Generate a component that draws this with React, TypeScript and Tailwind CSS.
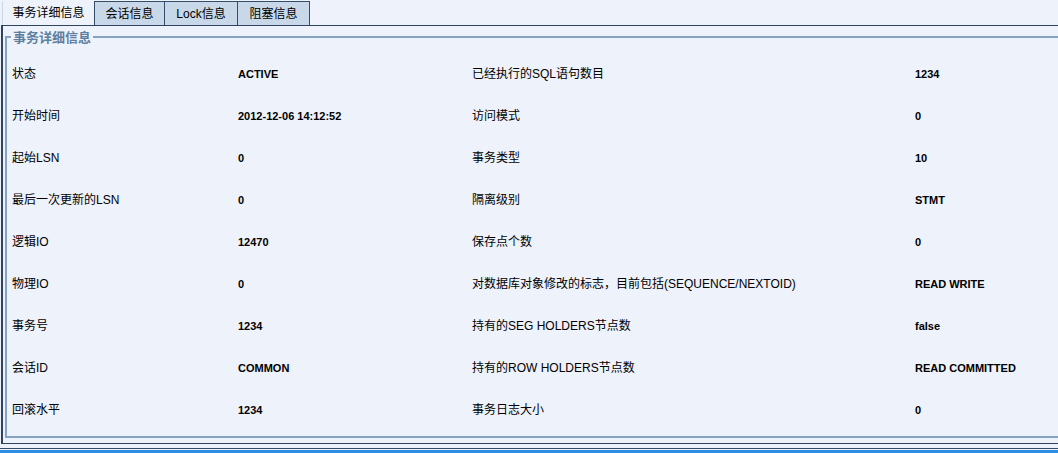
import React from "react";

const rows: [string, string, string, string][] = [
  ["状态", "ACTIVE", "已经执行的SQL语句数目", "1234"],
  ["开始时间", "2012-12-06 14:12:52", "访问模式", "0"],
  ["起始LSN", "0", "事务类型", "10"],
  ["最后一次更新的LSN", "0", "隔离级别", "STMT"],
  ["逻辑IO", "12470", "保存点个数", "0"],
  ["物理IO", "0", "对数据库对象修改的标志，目前包括(SEQUENCE/NEXTOID)", "READ WRITE"],
  ["事务号", "1234", "持有的SEG HOLDERS节点数", "false"],
  ["会话ID", "COMMON", "持有的ROW HOLDERS节点数", "READ COMMITTED"],
  ["回滚水平", "1234", "事务日志大小", "0"],
];

const tabs = ["会话信息", "Lock信息", "阻塞信息"];

export default function App() {
  return (
    <div
      className="w-[1058px] h-[453px] bg-[#EEF2FA] flex flex-col overflow-hidden text-[12px] text-black"
      style={{ fontFamily: '"Liberation Sans", "Noto Sans CJK SC", sans-serif' }}
    >
      <div className="h-[25px] flex items-end pl-[2px]">
        <div className="h-[24px] w-[92px] flex items-center justify-center border-l border-[#C9D7E6] bg-[#EEF2FA]">
          事务详细信息
        </div>
        {tabs.map((t, i) => (
          <div
            key={t}
            className={
              i === 0
                ? "h-[24px] w-[71px] flex items-center justify-center border-l border-t border-r border-[#334D6B] bg-[#C8D8E8]"
                : i === 1
                ? "h-[24px] w-[73px] flex items-center justify-center border-t border-r border-[#334D6B] bg-[#C8D8E8]"
                : "h-[24px] w-[72px] flex items-center justify-center border-t border-r border-[#334D6B] bg-[#C8D8E8]"
            }
          >
            {t}
          </div>
        ))}
      </div>
      <div className="ml-[1px] h-[419px] border-l-2 border-t border-b border-[#2E4460] flex flex-col pt-[10px] pl-[2px] pb-[5px]">
        <div className="relative flex-1 w-[1080px] border-t-2 border-l-2 border-b-2 border-[#86A3C2] pl-[5px] pt-[15px]">
          <div className="absolute left-[4px] top-[-7px] px-[2px] bg-[#EEF2FA] font-bold text-[13px] text-[#5E7FA0] leading-[14px]">
            事务详细信息
          </div>
          <div className="grid grid-cols-[226px_234px_443px_1fr] auto-rows-[42px] items-center">
            {rows.map((r) => (
              <React.Fragment key={r[0]}>
                <div>{r[0]}</div>
                <div className="font-bold text-[11px]">{r[1]}</div>
                <div>{r[2]}</div>
                <div className="font-bold text-[11px]">{r[3]}</div>
              </React.Fragment>
            ))}
          </div>
        </div>
      </div>
      <div className="h-[4px]" />
      <div className="h-[1px] bg-[#334D6B]" />
      <div className="h-[1px]" />
      <div className="flex-1 bg-[#2F8FE6]" />
    </div>
  );
}
